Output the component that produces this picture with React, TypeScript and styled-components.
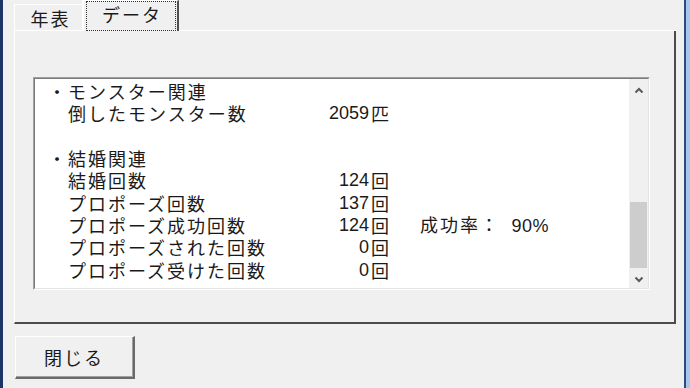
import React from "react";
import styled, { createGlobalStyle } from "styled-components";

const GlobalStyle = createGlobalStyle`
  html, body {
    margin: 0;
    padding: 0;
    background: #f0f0f0;
    width: 690px;
    height: 388px;
    overflow: hidden;
  }
  * { box-sizing: border-box; }
  body {
    font-family: "Noto Sans CJK JP", "Noto Sans", sans-serif;
    color: #1a1a1a;
  }
`;

const Window = styled.div`
  display: flex;
  width: 690px;
  height: 388px;
  background: #f0f0f0;
`;

const LeftEdge = styled.div`
  width: 3px;
  background: #1d3566;
`;

const RightEdge = styled.div`
  width: 6px;
  border-left: 2px solid #2a4b80;
  background: #a9c6e8;
`;

const Main = styled.div`
  flex: 1;
  display: flex;
  flex-direction: column;
  padding: 0 8px 0 11px;
`;

const TabStrip = styled.div`
  display: flex;
  align-items: flex-end;
  height: 31px;
`;

const Tab = styled.div<{ $active?: boolean }>`
  display: flex;
  font-size: 18px;
  letter-spacing: 2px;
  line-height: 1;
  background: #f0f0f0;
  ${(p) =>
    p.$active
      ? `
    width: 97px;
    height: 31px;
    border-top: 1px solid #ffffff;
    border-left: 2px solid #ffffff;
    border-right: 2px solid #505050;
    padding: 0 1px 0 2px;
  `
      : `
    width: 68px;
    height: 27px;
    border-top: 1px solid #ffffff;
    border-left: 1px solid #ffffff;
    border-bottom: 1px solid #ffffff;
    align-items: center;
    justify-content: center;
    padding: 0 0 0 4px;
  `}
`;

const FocusRect = styled.div`
  flex: 1;
  display: flex;
  align-items: center;
  justify-content: center;
  border: 1px dotted #333;
  padding: 0 0 5px 2px;
`;

const Filler = styled.div`
  flex: 1;
  height: 1px;
  background: #ffffff;
`;

const Panel = styled.div`
  height: 293px;
  border-left: 1px solid #ffffff;
  border-right: 2px solid #4c4c4c;
  border-bottom: 2px solid #4c4c4c;
  padding: 46px 0 0 18px;
`;

const ListFrame = styled.div`
  display: flex;
  width: 617px;
  height: 213px;
  border: 1px solid;
  border-color: #a0a0a0 #ffffff #ffffff #a0a0a0;
`;

const ListInner = styled.div`
  flex: 1;
  display: flex;
  border: 1px solid;
  border-color: #7a7a7a #e3e3e3 #e3e3e3 #7a7a7a;
`;

const TextArea = styled.div`
  flex: 1;
  background: #ffffff;
  padding: 1px 0 0 13px;
`;

const Row = styled.div<{ $indent?: boolean }>`
  display: flex;
  align-items: center;
  height: 22.3px;
  line-height: 22px;
  white-space: pre;
  padding-left: ${(p) => (p.$indent ? "20px" : "0")};
`;

const Label = styled.span<{ $indent?: boolean }>`
  width: ${(p) => (p.$indent ? "256px" : "auto")};
  font-size: 18px;
  letter-spacing: 2px;
`;

const Num = styled.span`
  width: 46px;
  text-align: right;
  font-family: "Liberation Sans", Arial, sans-serif;
  font-size: 18px;
  padding-right: 1px;
`;

const Unit = styled.span`
  width: 20px;
  font-size: 18px;
  text-align: center;
`;

const Rate = styled.span`
  margin-left: 30px;
  font-size: 18px;
  letter-spacing: 2px;
`;

const RateNum = styled.span`
  font-family: "Liberation Sans", Arial, sans-serif;
  font-size: 18px;
  letter-spacing: 0.5px;
  padding-left: 6px;
`;

const ScrollBar = styled.div`
  width: 19px;
  display: flex;
  flex-direction: column;
  background: #f0f0f0;
`;

const ArrowButton = styled.div<{ $h: number }>`
  height: ${(p) => p.$h}px;
  display: flex;
  align-items: center;
  justify-content: center;
`;

const Track = styled.div`
  flex: 1;
  display: flex;
  flex-direction: column;
`;

const Thumb = styled.div`
  width: 17px;
  margin: 0 auto;
  background: #cdcdcd;
`;

const ButtonRow = styled.div`
  display: flex;
  padding: 12px 0 0 1px;
`;

const Button = styled.button`
  width: 120px;
  height: 43px;
  background: #f0f0f0;
  border-top: 1px solid #ffffff;
  border-left: 1px solid #ffffff;
  border-right: 2px solid #6a6a6a;
  border-bottom: 2px solid #6a6a6a;
  box-shadow: inset -1px -1px 0 #a0a0a0;
  font-family: "Noto Sans CJK JP", sans-serif;
  font-size: 18px;
  letter-spacing: 2px;
  color: #1a1a1a;
  padding: 0 1px 0 0;
  display: flex;
  align-items: center;
  justify-content: center;
`;

const Chevron = ({ up }: { up?: boolean }) => (
  <svg width="10" height="7" viewBox="0 0 10 7">
    <polyline
      points={up ? "1.5,5.5 5,2 8.5,5.5" : "1.5,1.5 5,5 8.5,1.5"}
      fill="none"
      stroke="#5a5a5a"
      strokeWidth="2"
    />
  </svg>
);

type Line =
  | { kind: "head"; text: string }
  | { kind: "blank" }
  | { kind: "item"; text: string; num: string; unit: string; rate?: string };

const lines: Line[] = [
  { kind: "head", text: "・モンスター関連" },
  { kind: "item", text: "倒したモンスター数", num: "2059", unit: "匹" },
  { kind: "blank" },
  { kind: "head", text: "・結婚関連" },
  { kind: "item", text: "結婚回数", num: "124", unit: "回" },
  { kind: "item", text: "プロポーズ回数", num: "137", unit: "回" },
  { kind: "item", text: "プロポーズ成功回数", num: "124", unit: "回", rate: "90%" },
  { kind: "item", text: "プロポーズされた回数", num: "0", unit: "回" },
  { kind: "item", text: "プロポーズ受けた回数", num: "0", unit: "回" },
];

export default function App() {
  return (
    <>
      <GlobalStyle />
      <Window>
        <LeftEdge />
        <Main>
          <TabStrip>
            <Tab>年表</Tab>
            <Tab $active>
              <FocusRect>データ</FocusRect>
            </Tab>
            <Filler />
          </TabStrip>
          <Panel>
            <ListFrame>
              <ListInner>
                <TextArea>
                  {lines.map((l, i) => {
                    if (l.kind === "blank") return <Row key={i} />;
                    if (l.kind === "head")
                      return (
                        <Row key={i}>
                          <Label>{l.text}</Label>
                        </Row>
                      );
                    return (
                      <Row key={i} $indent>
                        <Label $indent>{l.text}</Label>
                        <Num>{l.num}</Num>
                        <Unit>{l.unit}</Unit>
                        {l.rate && (
                          <Rate>
                            成功率：
                            <RateNum> {l.rate}</RateNum>
                          </Rate>
                        )}
                      </Row>
                    );
                  })}
                </TextArea>
                <ScrollBar>
                  <ArrowButton $h={22}>
                    <Chevron up />
                  </ArrowButton>
                  <Track>
                    <Thumb style={{ marginTop: 101, height: 66 }} />
                  </Track>
                  <ArrowButton $h={17}>
                    <Chevron />
                  </ArrowButton>
                </ScrollBar>
              </ListInner>
            </ListFrame>
          </Panel>
          <ButtonRow>
            <Button>閉じる</Button>
          </ButtonRow>
        </Main>
        <RightEdge />
      </Window>
    </>
  );
}
